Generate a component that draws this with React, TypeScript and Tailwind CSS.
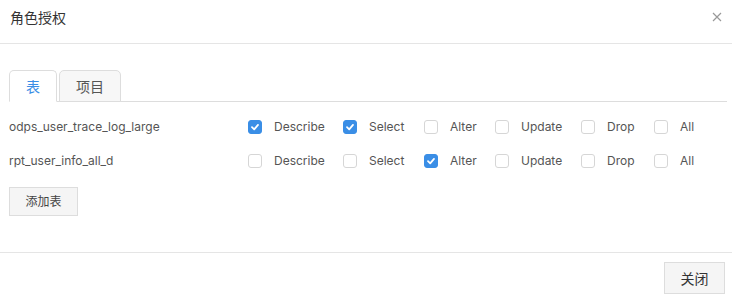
import { useState } from "react";

const PERMS = [
  { key: "Describe", w: "w-[95px]" },
  { key: "Select", w: "w-[81px]" },
  { key: "Alter", w: "w-[71px]" },
  { key: "Update", w: "w-[86px]" },
  { key: "Drop", w: "w-[73px]" },
  { key: "All", w: "w-[60px]" },
];

const initialRows = [
  { name: "odps_user_trace_log_large", checked: ["Describe", "Select"] },
  { name: "rpt_user_info_all_d", checked: ["Alter"] },
];

function Checkbox({ checked, onChange }: { checked: boolean; onChange: () => void }) {
  return (
    <button
      type="button"
      onClick={onChange}
      className={
        checked
          ? "flex h-[14px] w-[14px] shrink-0 items-center justify-center rounded-[3px] border border-[#3a8ee6] bg-[#3a8ee6]"
          : "flex h-[14px] w-[14px] shrink-0 items-center justify-center rounded-[3px] border border-[#d6d6d6] bg-white"
      }
    >
      {checked && (
        <svg width="10" height="10" viewBox="0 0 10 10" fill="none">
          <path d="M2 5.2 L4.2 7.3 L8 2.9" stroke="white" strokeWidth="1.8" strokeLinecap="round" strokeLinejoin="round" />
        </svg>
      )}
    </button>
  );
}

export default function App() {
  const [tab, setTab] = useState("table");
  const [rows, setRows] = useState(initialRows);

  const toggle = (i: number, p: string) => {
    setRows((rs) =>
      rs.map((r, idx) =>
        idx !== i
          ? r
          : { ...r, checked: r.checked.includes(p) ? r.checked.filter((c) => c !== p) : [...r.checked, p] }
      )
    );
  };

  return (
    <div className="h-[300px] w-[732px] bg-white font-['Inter','Noto_Sans_CJK_SC',sans-serif] text-[12px] text-[#555]">
      {/* header */}
      <div className="flex h-[44px] items-start justify-between border-b border-[#e5e5e5] pl-[10px] pr-[10px]">
        <div className="pt-[8px] text-[14px] leading-[20px] text-[#333]">角色授权</div>
        <button type="button" className="mt-[12px] text-[#999]">
          <svg width="10" height="10" viewBox="0 0 10 10">
            <path d="M1 1 L9 9 M9 1 L1 9" stroke="#999" strokeWidth="1.2" />
          </svg>
        </button>
      </div>

      {/* body */}
      <div className="h-[208px] pl-[9px] pr-[5px] pt-[26px]">
        <div className="flex gap-[2px] border-b border-[#ddd]">
          <button
            type="button"
            onClick={() => setTab("table")}
            className={
              tab === "table"
                ? "-mb-px h-[32px] w-[48px] rounded-t-[5px] border border-[#ddd] border-b-white bg-white text-[14px] text-[#3a8ee6]"
                : "-mb-px h-[32px] w-[48px] rounded-t-[5px] border border-[#ddd] bg-[#f7f7f7] text-[14px] text-[#555]"
            }
          >
            表
          </button>
          <button
            type="button"
            onClick={() => setTab("project")}
            className={
              tab === "project"
                ? "-mb-px h-[32px] w-[62px] rounded-t-[5px] border border-[#ddd] border-b-white bg-white text-[14px] text-[#3a8ee6]"
                : "-mb-px h-[32px] w-[62px] rounded-t-[5px] border border-[#ddd] bg-[#f7f7f7] text-[14px] text-[#555]"
            }
          >
            项目
          </button>
        </div>

        <div className="mt-[8px]">
          {rows.map((r, i) => (
            <div key={r.name} className="flex h-[34px] items-center">
              <div className="w-[239px]">{r.name}</div>
              <div className="flex items-center">
                {PERMS.map((p) => (
                  <label key={p.key} className={`flex items-center gap-[12px] ${p.w}`}>
                    <Checkbox checked={r.checked.includes(p.key)} onChange={() => toggle(i, p.key)} />
                    <span>{p.key}</span>
                  </label>
                ))}
              </div>
            </div>
          ))}
        </div>

        <button
          type="button"
          className="mt-[9px] h-[29px] w-[69px] border border-[#ddd] bg-[#f5f5f5] text-[12px] text-[#444]"
        >
          添加表
        </button>
      </div>

      {/* footer */}
      <div className="flex justify-end border-t border-[#e5e5e5] pr-[7px] pt-[9px]">
        <button type="button" className="h-[32px] w-[61px] border border-[#ddd] bg-[#f5f5f5] text-[14px] text-[#333]">
          关闭
        </button>
      </div>
    </div>
  );
}
